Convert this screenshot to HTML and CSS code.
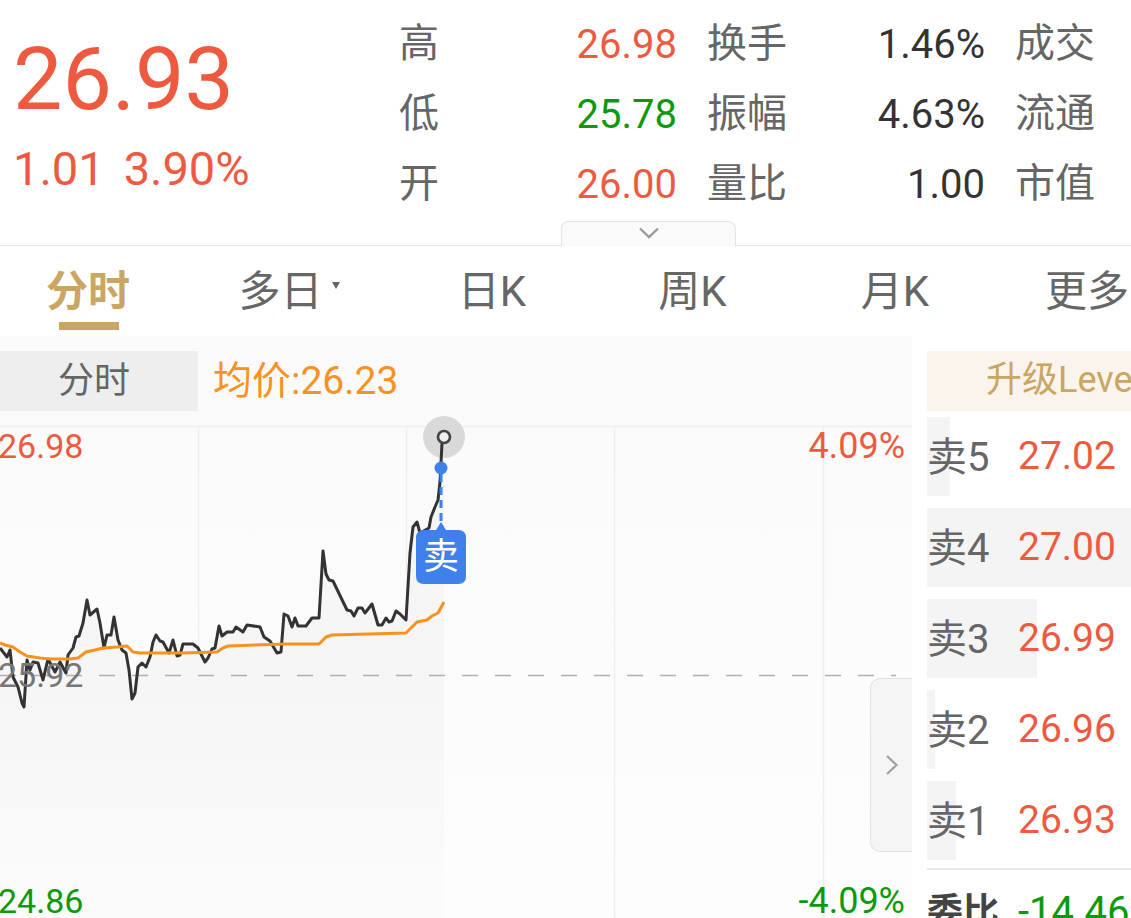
FILE: index.html
```html
<!DOCTYPE html>
<html lang="zh-CN">
<head>
<meta charset="UTF-8">
<meta name="viewport" content="width=device-width, initial-scale=1.0">
<title>分时</title>
<link rel="stylesheet" href="styles.css">
</head>
<body>
<div class="quote">
    <div class="price">
        <div class="price-now">26.93</div>
        <div class="price-change"><span>1.01</span><span>3.90%</span></div>
    </div>
    <div class="stats">
        <span class="stat-label">高</span><span class="stat-value up">26.98</span>
        <span class="stat-label">换手</span><span class="stat-value">1.46%</span><span class="stat-label">成交</span>
        <span class="stat-label">低</span><span class="stat-value down">25.78</span>
        <span class="stat-label">振幅</span><span class="stat-value">4.63%</span><span class="stat-label">流通</span>
        <span class="stat-label">开</span><span class="stat-value up">26.00</span>
        <span class="stat-label">量比</span><span class="stat-value">1.00</span><span class="stat-label">市值</span>
    </div>
    <div class="expand">
        <svg width="22" height="14" viewBox="0 0 22 14"><path d="M2 2.5 L11 11 L20 2.5" fill="none" stroke="#9a9a9a" stroke-width="2.4"/></svg>
    </div>
</div>

<div class="tabs">
    <div class="tab active">分时</div>
    <div class="tab">多日<span class="caret"></span></div>
    <div class="tab">日K</div>
    <div class="tab">周K</div>
    <div class="tab">月K</div>
    <div class="tab">更多</div>
</div>

<div class="main">
    <div class="chart">
        <div class="legend">
            <div class="legend-name">分时</div>
            <div class="legend-avg">均价:26.23</div>
        </div>
        <svg class="plot" width="912" height="507" viewBox="0 411 912 507">
            <defs>
                <linearGradient id="areaFill" x1="0" y1="0" x2="0" y2="1">
                    <stop offset="0" stop-color="#f4f4f4"/>
                    <stop offset="0.55" stop-color="#f6f6f6"/>
                    <stop offset="1" stop-color="#fbfbfb"/>
                </linearGradient>
            </defs>
            <line class="grid-line" x1="0" y1="426.5" x2="912" y2="426.5"/>
            <line class="grid-line" x1="198.5" y1="426" x2="198.5" y2="918"/>
            <line class="grid-line" x1="406.5" y1="426" x2="406.5" y2="918"/>
            <line class="grid-line" x1="614.5" y1="426" x2="614.5" y2="918"/>
            <line class="grid-line" x1="823.5" y1="426" x2="823.5" y2="918"/>

            <polygon fill="url(#areaFill)" points="0,648 7,657 10,650 13,677 18,687 22,703 24,707 27,660 30,670 33,662 38,663 43,680 48,659 55,672 60,662 66,673 68,655 73,648 76,637 79,636 83,623 87,600 90,615 97,609 100,623 104,648 107,635 111,635 114,617 118,640 122,650 126,653 129,670 132,699 135,693 138,667 142,663 146,667 150,657 153,642 156,635 160,641 163,642 169,653 173,640 177,656 180,655 183,644 193,644 198,648 205,662 208,658 212,649 215,648 219,626 222,636 227,632 233,632 236,627 243,632 247,625 260,627 264,637 270,641 277,653 281,652 284,614 288,616 292,627 295,618 298,626 306,626 312,618 319,618 323,551 326,574 329,580 333,581 347,610 351,611 354,616 358,608 362,608 365,613 372,604 378,625 382,625 386,618 389,622 392,621 396,611 400,614 406,620 410,553 413,527 417,522 420,533 429,528 431,517 435,507 438,500 440,482 442,443 444,443 444,918 0,918"/>

            <line x1="0" y1="675.5" x2="896" y2="675.5" stroke="#b0b0b0" stroke-width="1.4" stroke-dasharray="16 17"/>

            <circle cx="444" cy="437" r="21" fill="#d9d9d9"/>
            <polyline class="line-price" points="0,648 7,657 10,650 13,677 18,687 22,703 24,707 27,660 30,670 33,662 38,663 43,680 48,659 55,672 60,662 66,673 68,655 73,648 76,637 79,636 83,623 87,600 90,615 97,609 100,623 104,648 107,635 111,635 114,617 118,640 122,650 126,653 129,670 132,699 135,693 138,667 142,663 146,667 150,657 153,642 156,635 160,641 163,642 169,653 173,640 177,656 180,655 183,644 193,644 198,648 205,662 208,658 212,649 215,648 219,626 222,636 227,632 233,632 236,627 243,632 247,625 260,627 264,637 270,641 277,653 281,652 284,614 288,616 292,627 295,618 298,626 306,626 312,618 319,618 323,551 326,574 329,580 333,581 347,610 351,611 354,616 358,608 362,608 365,613 372,604 378,625 382,625 386,618 389,622 392,621 396,611 400,614 406,620 410,553 413,527 417,522 420,533 429,528 431,517 435,507 438,500 440,482 442,443"/>
            <polyline class="line-avg" points="0,643 5,645 13,647 20,652 27,656 40,658 50,659 70,659 78,658 86,652 95,650 103,648 117,647 127,646 133,652 140,653 150,653 183,653 217,652 223,648 228,646 286,644 319,644 326,637 332,635 406,633 417,622 427,620 432,616 438,613 444,602"/>

            <circle cx="444" cy="437" r="6" fill="#eee" stroke="#444" stroke-width="2.6"/>
            <line x1="441" y1="474" x2="441" y2="522" stroke="#3f80ea" stroke-width="3" stroke-dasharray="8 5"/>
            <circle cx="441" cy="468" r="6.5" fill="#3f80ea"/>
            <path d="M441 522 L446 530 L458 530 Q466 530 466 538 L466 576 Q466 584 458 584 L424 584 Q416 584 416 576 L416 538 Q416 530 424 530 L436 530 Z" fill="#3f80ea"/>
            <text class="tag-text" x="441" y="569" text-anchor="middle">卖</text>

            <text class="axis up-fill" x="-2" y="458">26.98</text>
            <text class="axis grey-fill" x="-2" y="687">25.92</text>
            <text class="axis down-fill" x="-2" y="913">24.86</text>
            <text class="axis axis-pct up-fill" x="905" y="458" text-anchor="end">4.09%</text>
            <text class="axis axis-pct down-fill" x="905" y="913" text-anchor="end">-4.09%</text>
        </svg>
        <div class="handle">
            <svg width="14" height="22" viewBox="0 0 14 22"><path d="M2 2 L11.5 11 L2 20" fill="none" stroke="#a0a0a0" stroke-width="2.2"/></svg>
        </div>
    </div>

    <div class="book">
        <div class="upgrade">升级Level-2</div>
        <div class="book-rows">
            <div class="book-row"><div class="book-bar" style="width:23px"></div><span class="book-name">卖5</span><span class="book-price">27.02</span></div>
            <div class="book-row"><div class="book-bar" style="width:204px"></div><span class="book-name">卖4</span><span class="book-price">27.00</span></div>
            <div class="book-row"><div class="book-bar" style="width:110px"></div><span class="book-name">卖3</span><span class="book-price">26.99</span></div>
            <div class="book-row"><div class="book-bar" style="width:8px"></div><span class="book-name">卖2</span><span class="book-price">26.96</span></div>
            <div class="book-row"><div class="book-bar" style="width:29px"></div><span class="book-name">卖1</span><span class="book-price">26.93</span></div>
        </div>
        <div class="book-ratio"><span class="ratio-name">委比</span><span class="ratio-value">-14.46%</span></div>
    </div>
</div>
</body>
</html>
```

FILE: styles.css
```css
html, body {
    margin: 0;
    padding: 0;
    height: 918px;
    overflow: hidden;
    background: #fff;
}

body {
    width: 1131px;
    font-family: Roboto, "Noto Sans CJK SC", sans-serif;
    color: #666;
}

.quote {
    position: relative;
    display: flex;
    height: 245px;
    border-bottom: 1px solid #e6e6e6;
}

.price {
    width: 399px;
    padding: 17px 0 0 13px;
    box-sizing: border-box;
    color: #ee5a3f;
}
.price-now {
    font-size: 88px;
    line-height: 124px;
}
.price-change {
    display: flex;
    gap: 19px;
    font-size: 47px;
    line-height: 56px;
}

.stats {
    display: grid;
    grid-template-columns: 40px 238px 111px 197px 119px;
    grid-auto-rows: 70px;
    padding-top: 9px;
    align-items: center;
    font-size: 40px;
    white-space: nowrap;
}
.stat-label {
    line-height: 70px;
}
.stats .stat-label:nth-child(5n+3) {
    padding-left: 30px;
}
.stats .stat-label:nth-child(5n) {
    padding-left: 30px;
}
.stat-value {
    text-align: right;
    font-size: 40px;
    color: #333;
}
.stat-value.up {
    color: #ee5a3f;
}
.stat-value.down {
    color: #0c9a0c;
}

.expand {
    position: absolute;
    left: 561px;
    bottom: -1px;
    width: 175px;
    height: 25px;
    display: flex;
    justify-content: center;
    padding-top: 4px;
    box-sizing: border-box;
    background: #fafafa;
    border: 1px solid #e4e4e4;
    border-bottom: none;
    border-radius: 8px 8px 0 0;
}

.tabs {
    display: grid;
    grid-template-columns: 176px 226px 180px 221px 184px 200px;
    height: 90px;
    font-size: 42px;
    width: 1187px;
}
.tab {
    position: relative;
    text-align: center;
    line-height: 92px;
}
.tab.active {
    color: #c9a661;
    font-weight: 700;
}
.tab.active::after {
    content: "";
    position: absolute;
    left: 59px;
    top: 76px;
    width: 60px;
    height: 8px;
    background: #c9a661;
}
.caret {
    display: inline-block;
    margin: 0 0 18px 9px;
    vertical-align: middle;
    border-left: 4px solid transparent;
    border-right: 4px solid transparent;
    border-top: 7px solid #666;
}

.main {
    display: flex;
    height: 582px;
}

.chart {
    position: relative;
    width: 912px;
    flex: none;
    overflow: hidden;
    background: linear-gradient(#fafafa, #fdfdfd);
}
.legend {
    display: flex;
    align-items: center;
    height: 60px;
    margin-top: 15px;
    font-size: 36px;
}
.legend-name {
    width: 198px;
    height: 60px;
    padding-left: 58px;
    box-sizing: border-box;
    line-height: 60px;
    background: #eee;
}
.legend-avg {
    margin: 0 0 8px 15px;
    font-size: 39px;
    color: #f7921e;
}
.plot {
    display: block;
}
.grid-line {
    stroke: #efefef;
    stroke-width: 1.5;
}
.line-price {
    fill: none;
    stroke: #333;
    stroke-width: 3;
    stroke-linejoin: round;
}
.line-avg {
    fill: none;
    stroke: #f7921e;
    stroke-width: 3;
    stroke-linejoin: round;
}
.tag-text {
    font-size: 36px;
    fill: #fff;
}
.axis {
    font-size: 34px;
}
.axis-pct {
    font-size: 36px;
}
.up-fill {
    fill: #ee5a3f;
}
.down-fill {
    fill: #0c9a0c;
}
.grey-fill {
    fill: #777;
}

.handle {
    position: absolute;
    left: 870px;
    top: 342px;
    width: 42px;
    height: 174px;
    display: flex;
    align-items: center;
    justify-content: center;
    box-sizing: border-box;
    background: #f5f5f5;
    border: 1px solid #e2e2e2;
    border-right: none;
    border-radius: 10px 0 0 10px;
}

.book {
    margin-left: 15px;
    width: 204px;
    flex: none;
    overflow: hidden;
}
.upgrade {
    height: 60px;
    margin-top: 15px;
    padding-left: 59px;
    line-height: 58px;
    font-size: 36px;
    white-space: nowrap;
    color: #c9a661;
    background: #faf4ec;
}
.book-rows {
    display: flex;
    flex-direction: column;
    gap: 12px;
    margin-top: 6px;
}
.book-row {
    position: relative;
    display: flex;
    height: 79px;
    align-items: center;
    font-size: 40px;
}
.book-bar {
    position: absolute;
    left: 0;
    top: 0;
    bottom: 0;
    background: #f4f4f4;
}
.book-name {
    position: relative;
    width: 91px;
    margin-bottom: 6px;
    flex: none;
}
.book-price {
    position: relative;
    margin-bottom: 2px;
    color: #ee5a3f;
    font-size: 39px;
}
.book-ratio {
    display: flex;
    margin-top: 8px;
    padding-top: 17px;
    border-top: 2px solid #e8e8e8;
    white-space: nowrap;
    align-items: center;
    line-height: 50px;
}
.ratio-name {
    width: 91px;
    flex: none;
    font-size: 36px;
    font-weight: 700;
    color: #444;
}
.ratio-value {
    font-size: 40px;
    color: #0c9a0c;
}
```
